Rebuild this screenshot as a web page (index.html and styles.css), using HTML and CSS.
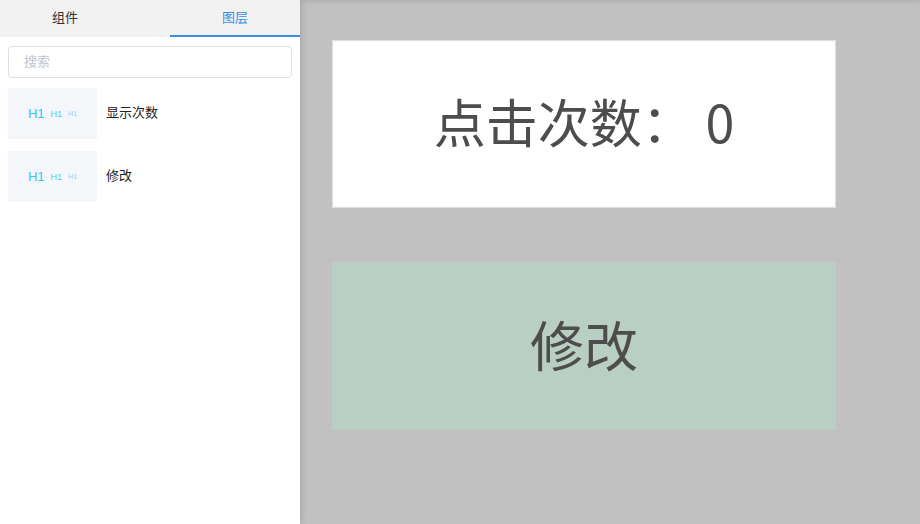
FILE: index.html
```html
<!DOCTYPE html>
<html lang="zh-CN">
  <head>
    <meta charset="UTF-8" />
    <meta name="viewport" content="width=device-width, initial-scale=1.0" />
    <title>编辑器</title>
    <link rel="stylesheet" href="styles.css">
  </head>
  <body>
    <div class="editor">
      <aside class="sidebar">
        <div class="tabs">
          <a href="#" class="tab">组件</a>
          <a href="#" class="tab active-tab">图层</a>
        </div>
        <div class="search">
          <input type="text" placeholder="搜索" />
        </div>
        <ul class="layers">
          <li>
            <div class="thumb"><span class="h-big">H1</span><span class="h-mid">H1</span><span class="h-small">H1</span></div>
            <span class="layer-name">显示次数</span>
          </li>
          <li>
            <div class="thumb"><span class="h-big">H1</span><span class="h-mid">H1</span><span class="h-small">H1</span></div>
            <span class="layer-name">修改</span>
          </li>
        </ul>
      </aside>
      <main class="canvas">
        <div class="block block-text">点击次数：&nbsp;0</div>
        <div class="block block-button">修改</div>
      </main>
    </div>
  </body>
</html>
```

FILE: styles.css
```css
body,
html {
  margin: 0;
  padding: 0;
  height: 100%;
}

body {
  font-family: "Noto Sans CJK SC", "Noto Sans", sans-serif;
  color: #303133;
}

.editor {
  display: flex;
  height: 100%;
}

.sidebar {
  width: 300px;
  flex-shrink: 0;
  background: #fff;
  box-shadow: 2px 0 6px rgba(0, 0, 0, 0.12);
  position: relative;
  z-index: 1;
}

.tabs {
  display: flex;
  justify-content: space-between;
  background: #f2f2f2;
  height: 37px;
}

.tab {
  width: 130px;
  text-align: center;
  line-height: 33px;
  height: 35px;
  font-size: 13px;
  color: #303133;
  text-decoration: none;
  border-bottom: 2px solid transparent;
}

.active-tab {
  color: #3a8ee6;
  border-bottom-color: #3a8ee6;
}

.search {
  padding: 9px 8px 0;
}

.search input {
  box-sizing: border-box;
  width: 100%;
  height: 32px;
  border: 1px solid #dcdfe6;
  border-radius: 4px;
  padding: 0 15px 3px;
  font-size: 13px;
  font-family: inherit;
  outline: none;
}

.search input::placeholder {
  color: #c0c4cc;
}

.layers {
  list-style-type: none;
  margin: 0;
  padding: 10px 8px 0;
}

.layers li {
  display: flex;
  align-items: center;
  gap: 9px;
  margin-bottom: 12px;
}

.thumb {
  width: 89px;
  height: 51px;
  background: #f5f6fa;
  display: flex;
  align-items: center;
  justify-content: center;
  gap: 6px;
  color: #29c9fb;
  font-family: "Liberation Sans", sans-serif;
}

.h-big {
  font-size: 13px;
}

.h-mid {
  font-size: 9px;
  opacity: 0.85;
}

.h-small {
  font-size: 7px;
  opacity: 0.6;
}

.layer-name {
  font-size: 13px;
  color: #222;
  padding-bottom: 4px;
}

.canvas {
  flex: 1;
  background: #c1c1c1;
  box-shadow: inset 0 4px 5px -3px rgba(0, 0, 0, 0.12);
  padding: 40px 32px;
  display: flex;
  flex-direction: column;
  gap: 54px;
}

.block {
  width: 504px;
  height: 168px;
  box-sizing: border-box;
  display: flex;
  align-items: center;
  justify-content: center;
  line-height: 1;
  color: #4d4d4d;
}

.block-text {
  background: #fff;
  border: 1px solid #dedede;
  font-size: 52px;
  padding-bottom: 6px;
}

.block-button {
  background: #b9cfc3;
  font-size: 54px;
  padding-bottom: 4px;
}
```
